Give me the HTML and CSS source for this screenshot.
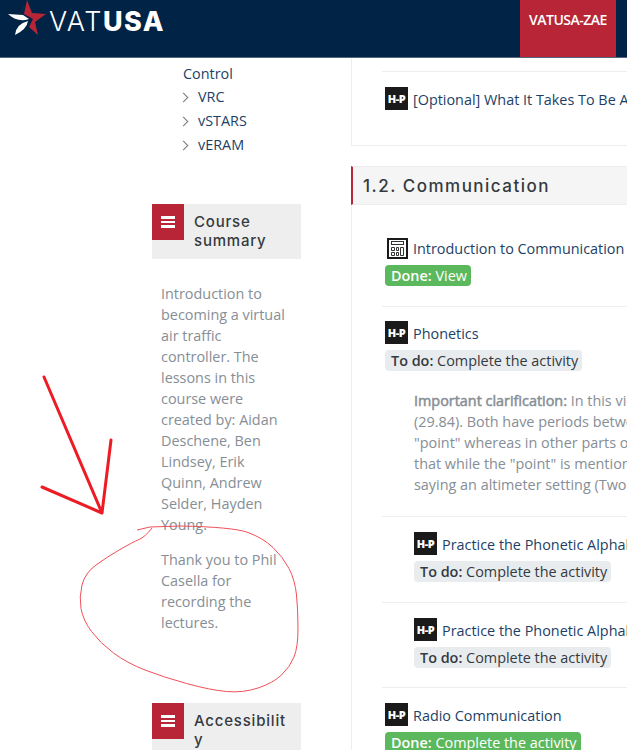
FILE: index.html
```html
<!DOCTYPE html>
<html lang="en">
<head>
  <meta charset="UTF-8" />
  <meta name="viewport" content="width=device-width, initial-scale=1.0"/>
  <title>VATUSA</title>
  <link rel="stylesheet" href="styles.css">
</head>
<body>

  <header class="topbar">
    <a class="brand" href="#">
      <svg class="brand-star" width="44" height="37" viewBox="0 0 44 37">
        <path fill="#b72537" d="M23 0 L28 13 L42 14 L31 22 L34 35 L25 27 L29 19 L20 14 Z"/>
        <path fill="#ffffff" d="M4 14 L19 15 L25 19 Q14 23 4 14 Z"/>
        <path fill="#ffffff" d="M11 35 Q12 24 24 21 Q23 29 11 35 Z"/>
      </svg>
      <span class="brand-name">VAT<b>USA</b></span>
    </a>
    <a class="facility-tab" href="#">VATUSA-ZAE</a>
  </header>

  <div class="page">
    <aside class="sidebar">
      <ul class="toc">
        <li class="toc-parent">of Ground Control</li>
        <li>VRC</li>
        <li>vSTARS</li>
        <li>vERAM</li>
      </ul>

      <section class="block">
        <div class="block-head">
          <span class="block-icon"><i></i><i></i><i></i></span>
          <h2>Course summary</h2>
        </div>
        <div class="block-body">
          <p>Introduction to becoming a virtual air traffic controller. The lessons in this course were created by: Aidan Deschene, Ben Lindsey, Erik Quinn, Andrew Selder, Hayden Young.</p>
          <p>Thank you to Phil Casella for recording the lectures.</p>
        </div>
      </section>

      <section class="block block-last">
        <div class="block-head">
          <span class="block-icon"><i></i><i></i><i></i></span>
          <h2>Accessibility</h2>
        </div>
      </section>
    </aside>

    <main class="content">
      <div class="card card-top">
        <div class="item item-optional">
          <div class="item-title"><span class="hp-icon">H-P</span>[Optional] What It Takes To Be A Virtual Air Traffic Controller</div>
        </div>
      </div>

      <h3 class="section-title">1.2. Communication</h3>

      <div class="card">
        <div class="item item-first">
          <div class="item-title">
            <svg class="calc-icon" width="21" height="21" viewBox="0 0 21 21">
              <rect x="1" y="1" width="19" height="19" fill="#fff" stroke="#1a1a1a" stroke-width="2"/>
              <rect x="4.5" y="3.5" width="12" height="3" fill="#fff" stroke="#333" stroke-width="1"/>
              <path fill="none" stroke="#333" stroke-width="1" d="M4.5 9.5h3v3h-3zM9.5 9.5h2v3h-2zM4.5 14.5h3v3h-3zM9.5 14.5h2v3h-2zM13.5 9.5h3v8h-3z"/>
            </svg>
            Introduction to Communication
          </div>
          <span class="badge badge-done"><b>Done:</b> View</span>
        </div>

        <div class="item item-phonetics">
          <div class="item-title"><span class="hp-icon">H-P</span>Phonetics</div>
          <span class="badge badge-todo"><b>To do:</b> Complete the activity</span>
          <p class="item-note"><b>Important clarification:</b> In this video the<br>(29.84). Both have periods between the<br>"point" whereas in other parts of the<br>that while the "point" is mentioned in<br>saying an altimeter setting (Two Niner</p>
        </div>

        <div class="item item-indent">
          <div class="item-title"><span class="hp-icon">H-P</span>Practice the Phonetic Alphabet</div>
          <span class="badge badge-todo"><b>To do:</b> Complete the activity</span>
        </div>

        <div class="item item-indent">
          <div class="item-title"><span class="hp-icon">H-P</span>Practice the Phonetic Alphabet</div>
          <span class="badge badge-todo"><b>To do:</b> Complete the activity</span>
        </div>

        <div class="item">
          <div class="item-title"><span class="hp-icon">H-P</span>Radio Communication</div>
          <span class="badge badge-done"><b>Done:</b> Complete the activity</span>
        </div>
      </div>
    </main>
  </div>

  <!-- red pen marks drawn over the screenshot -->
  <svg class="pen-marks" width="627" height="750" viewBox="0 0 627 750">
    <path class="pen-arrow" d="M44 377 L102 513 L111 440 M42 487 L102 513"/>
    <path class="pen-circle" d="M137 530 L150 527 L180 526 Q233 527 248 532.5 Q263 538 273 547.5 Q283 557 289 568.5 Q295 580 296.5 595 Q298 610 298 628.5 Q298 647 294 657 Q290 667 281.5 675 Q273 683 258 688 Q243 693 226.5 691.5 Q210 690 186.5 683.5 Q163 677 145 670 Q127 663 113.5 653 Q100 643 91.5 631.5 Q83 620 81 608.5 Q79 597 82 585 Q85 573 96 565 Q107 557 120 549.5 Q133 542 139 539.5 Q145 537 152 528"/>
  </svg>

</body>
</html>
```

FILE: styles.css
```css
html, body {
  height: 100%;
}

body {
  margin: 0;
  height: 750px;
  overflow: hidden;
  font-family: "Open Sans", sans-serif;
  font-size: 14.4px;
  line-height: 21px;
  color: #1d3f66;
  background: #fff;
  position: relative;
}

.topbar {
  position: fixed;
  top: 0;
  left: 0;
  right: 0;
  height: 57px;
  z-index: 10;
  display: flex;
  justify-content: space-between;
  padding-right: 11px;
  background: #012345;
  border-bottom: 1px solid #52667c;
}

.brand {
  display: flex;
  align-items: flex-start;
  padding-left: 4px;
  color: #fff;
  text-decoration: none;
}

.brand-star {
  display: block;
}

.brand-name {
  margin-left: 1px;
  font-family: Inter, sans-serif;
  font-size: 27px;
  font-weight: 300;
  line-height: 43px;
  letter-spacing: 1.5px;
}

.brand-name b {
  font-weight: 800;
}

.facility-tab {
  width: 96px;
  text-align: center;
  background: #b72537;
  color: #fff;
  font-size: 14px;
  font-weight: 600;
  letter-spacing: -0.5px;
  line-height: 40px;
  text-decoration: none;
}

.page {
  display: grid;
  grid-template-columns: 351px 1fr;
  height: 750px;
  overflow: hidden;
}

.sidebar {
  padding-left: 152px;
  padding-right: 50px;
}

.toc {
  list-style: none;
  margin: 0;
  padding: 42px 0 0 31px;
  line-height: 24px;
}

.toc li {
  position: relative;
  padding-left: 15px;
}

.toc li::before {
  content: "";
  position: absolute;
  left: -3.5px;
  top: 8.5px;
  width: 7px;
  height: 7px;
  box-sizing: border-box;
  border-top: 1px solid #777;
  border-right: 1px solid #777;
  transform: rotate(45deg);
}

.toc .toc-parent {
  padding-left: 0;
  line-height: 21px;
  margin-bottom: 1px;
}

.toc .toc-parent::before {
  display: none;
}

.block {
  margin-top: 47px;
}

.block-last {
  margin-top: 70px;
}

.block-head {
  display: flex;
  align-items: flex-start;
  background: #eeeeee;
}

.block-icon {
  flex: none;
  width: 32px;
  height: 36px;
  display: flex;
  flex-direction: column;
  align-items: center;
  justify-content: center;
  gap: 2px;
  background: #b72537;
}

.block-icon i {
  display: block;
  width: 14px;
  height: 2.5px;
  background: #fff;
}

.block-head h2 {
  min-width: 0;
  margin: 8px 12px 9px 10px;
  font-family: Inter, sans-serif;
  font-size: 15px;
  font-weight: 500;
  line-height: 19px;
  letter-spacing: 0.8px;
  color: #343a40;
  overflow-wrap: anywhere;
}

.block-body {
  padding: 24px 8px 0 9px;
  color: #868e96;
}

.block-body p {
  margin: 0 0 14px;
}

.content {
  min-width: 0;
  overflow: hidden;
}

.card {
  border-left: 1px solid #eeeeee;
  border-bottom: 1px solid #eeeeee;
  padding-left: 30px;
}

.card-top {
  height: 146px;
  padding-top: 71px;
  box-sizing: border-box;
  margin-bottom: 20px;
}

.item {
  padding: 15px 0 20px 3px;
  border-bottom: 1px solid #eeeeee;
  white-space: nowrap;
}

.item-optional {
  border-bottom: none;
  border-top: 1px solid #eeeeee;
}

.item-first {
  padding-top: 31px;
}

.item-phonetics {
  padding-top: 14px;
}

.item-indent {
  padding-left: 32px;
  padding-bottom: 19.5px;
}

.item-title {
  display: flex;
  align-items: flex-start;
  height: 23px;
  margin-bottom: 6px;
  line-height: 26px;
}

.hp-icon {
  flex: none;
  width: 23px;
  height: 23px;
  margin-right: 5px;
  background: #1a1a1a;
  color: #fff;
  font-size: 11px;
  font-weight: 800;
  line-height: 23px;
  letter-spacing: -0.5px;
  text-align: center;
}

.calc-icon {
  flex: none;
  margin: 2px 5px 0 2px;
}

.badge {
  display: inline-block;
  padding: 0 4px 0 6px;
  border-radius: 4px;
  line-height: 21px;
  vertical-align: top;
}

.badge b {
  font-weight: 600;
}

.badge-done {
  background: #5cb85c;
  color: #fff;
}

.badge-todo {
  background: #e9ecef;
  color: #343a40;
}

.item-note {
  margin: 19px 0 1px 29px;
  color: #868e96;
}

/* regular widths in the reference, only thickened */
.item-note b {
  font-weight: 400;
  -webkit-text-stroke: 0.5px #868e96;
}

.section-title {
  margin: 0;
  height: 39px;
  box-sizing: border-box;
  padding-left: 10px;
  background: #f5f5f5;
  border-left: 2px solid #b72537;
  border-top: 1px solid #eeeeee;
  border-bottom: 1px solid #eeeeee;
  font-family: Inter, sans-serif;
  font-size: 17px;
  font-weight: 500;
  line-height: 38px;
  letter-spacing: 1.5px;
  color: #343a40;
}

.pen-marks {
  position: absolute;
  top: 0;
  left: 0;
  z-index: 20;
  pointer-events: none;
  fill: none;
}

.pen-arrow {
  stroke: #ed1c24;
  stroke-width: 3;
  stroke-linecap: round;
  stroke-linejoin: round;
}

.pen-circle {
  stroke: #ef4f57;
  stroke-width: 1;
}
```
